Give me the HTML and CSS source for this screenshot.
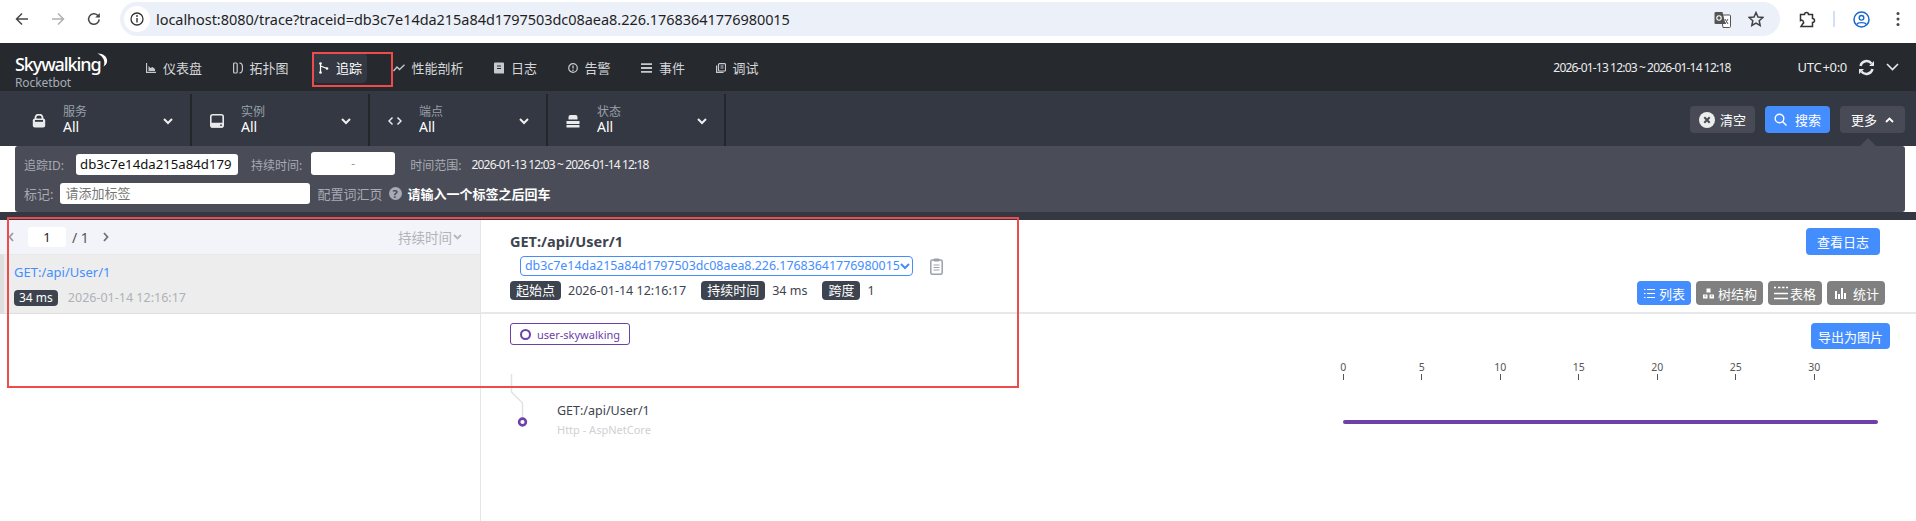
FILE: index.html
```html
<!DOCTYPE html>
<html lang="zh-CN">
<head>
<meta charset="utf-8">
<title>SkyWalking Trace</title>
<link rel="stylesheet" href="styles.css">
</head>
<body>
<header class="chrome">
  <svg class="c-btn c-back" viewBox="0 0 14 14"><path d="M13 7H2M7 1.5 1.5 7 7 12.5" fill="none" stroke="#474747" stroke-width="1.5"/></svg>
  <svg class="c-btn c-fwd" viewBox="0 0 14 14"><path d="M1 7h11M7 1.5 12.5 7 7 12.5" fill="none" stroke="#b0b0b0" stroke-width="1.5"/></svg>
  <svg class="c-btn c-reload" viewBox="0 0 14 14"><path d="M12.2 7.4A5.3 5.3 0 1 1 10.6 3.2L12.4 5" fill="none" stroke="#474747" stroke-width="1.5"/><path d="M12.8 1v4.6H8.2z" fill="#474747"/></svg>
  <div class="omnibox">
    <span class="info-chip"><svg viewBox="0 0 14 14" width="14" height="14"><circle cx="7" cy="7" r="6" fill="none" stroke="#333" stroke-width="1.3"/><path d="M7 6v4.4" stroke="#333" stroke-width="1.4"/><circle cx="7" cy="4" r=".9" fill="#333"/></svg></span>
    <span class="url">localhost:8080/trace?traceid=db3c7e14da215a84d1797503dc08aea8.226.17683641776980015</span>
    <svg class="o-translate" viewBox="0 0 17 17" width="17" height="17"><path d="M7 4h8.500a1 1 0 0 1 1 1v10.500a1 1 0 0 1-1 1H9z" fill="#fff" stroke="#555"/><path d="M1.500 1h7l3 12h-10a1 1 0 0 1-1-1V2a1 1 0 0 1 1-1z" fill="#555"/><circle cx="5" cy="7" r="2.200" fill="none" stroke="#fff" stroke-width="1.100"/><path d="M11 8l3 5M14 8l-3 5" stroke="#555"/></svg>
    <svg class="o-star" viewBox="0 0 16 16" width="16" height="16"><path d="M8 1.500l2 4.500 4.800.5-3.600 3.200 1 4.800L8 12.100 3.800 14.500l1-4.800L1.200 6.500 6 6z" fill="none" stroke="#444" stroke-width="1.500"/></svg>
  </div>
  <svg class="c-ext" viewBox="0 0 17 17" width="17" height="17"><path d="M1.500 3.500h4a2 2 0 0 1 4 0h4v4a2 2 0 0 1 0 4v4h-11.500l1.500-2.500a2 2 0 0 0-2-3.500z" fill="none" stroke="#333" stroke-width="1.500"/></svg>
  <span class="c-sep"></span>
  <svg class="c-profile" viewBox="0 0 17 17" width="17" height="17"><circle cx="8.500" cy="8.500" r="7.500" fill="none" stroke="#1a66d2" stroke-width="1.500"/><circle cx="8.500" cy="6.800" r="2.300" fill="none" stroke="#1a66d2" stroke-width="1.400"/><path d="M3.800 13.500c1-2.500 8.400-2.500 9.400 0" fill="none" stroke="#1a66d2" stroke-width="1.400"/></svg>
  <svg class="c-dots" viewBox="0 0 4 16" width="4" height="16"><circle cx="2" cy="2.500" r="1.500" fill="#474747"/><circle cx="2" cy="8" r="1.500" fill="#474747"/><circle cx="2" cy="13.500" r="1.500" fill="#474747"/></svg>
</header>

<nav class="nav">
  <div class="logo">
    <div class="logo-main"><span>Sky</span><span class="logo-w">walking</span><svg class="logo-moon" viewBox="0 0 14 14" width="15" height="14"><path d="M3 .6C8 .2 13 3.500 12.600 8.500 12.400 10.800 11 12.500 9 13.500 10.500 10.500 10 6.500 7.800 4.200 6.500 2.800 5 1.800 3 .6z" fill="#fff"/></svg></div>
    <div class="logo-sub">Rocketbot</div>
  </div>
  <div class="nav-items">
    <a class="nav-item"><svg viewBox="0 0 10 10" width="10" height="10"><path d="M.5 0v9.500H10" fill="none" stroke="#c6c9cd" stroke-width="1.300"/><path d="M2.500 8V3l2 2 2-1 2.500 2v2z" fill="#c6c9cd"/></svg>仪表盘</a>
    <a class="nav-item"><svg viewBox="0 0 10 12" width="10" height="12"><rect x=".6" y="1" width="3.600" height="10" rx="1" fill="none" stroke="#c6c9cd" stroke-width="1.200"/><path d="M6.500 1.200h.5c1.500 0 2.500 1.500 2.500 4.800s-1 4.800-2.500 4.800h-.5" fill="none" stroke="#c6c9cd" stroke-width="1.200"/></svg>拓扑图</a>
    <a class="nav-item active"><svg viewBox="0 0 10 12" width="10" height="12"><path d="M1.500 1v10M1.500 4l6.500 2.500" stroke="#fff" stroke-width="1.200"/><circle cx="1.500" cy="1.500" r="1.300" fill="#fff"/><circle cx="1.500" cy="10.500" r="1.300" fill="#fff"/><circle cx="8" cy="6.500" r="1.300" fill="#fff"/></svg>追踪</a>
    <a class="nav-item"><svg viewBox="0 0 12 8" width="12" height="8"><path d="M.5 7 4 3l2.500 2.500L11.500.8" fill="none" stroke="#c6c9cd" stroke-width="1.300"/></svg>性能剖析</a>
    <a class="nav-item"><svg viewBox="0 0 10 12" width="10" height="12"><path d="M1 .5h8a1 1 0 0 1 1 1v10H1a1 1 0 0 1-1-1v-9a1 1 0 0 1 1-1z" fill="#c6c9cd"/><path d="M3 4h4M3 6.500h4" stroke="#26292e" stroke-width="1.200"/></svg>日志</a>
    <a class="nav-item"><svg viewBox="0 0 10 10" width="10" height="10"><circle cx="5" cy="5" r="4.300" fill="none" stroke="#c6c9cd" stroke-width="1.200"/><path d="M5 2.500v3" stroke="#c6c9cd" stroke-width="1.300"/><circle cx="5" cy="7.300" r=".8" fill="#c6c9cd"/></svg>告警</a>
    <a class="nav-item"><svg viewBox="0 0 11 10" width="11" height="10"><path d="M0 1.200h11M0 5h11M0 8.800h11" stroke="#c6c9cd" stroke-width="1.800"/></svg>事件</a>
    <a class="nav-item"><svg viewBox="0 0 10 10" width="10" height="10"><rect x="2.500" y=".6" width="7" height="7.400" rx="1" fill="none" stroke="#c6c9cd" stroke-width="1.200"/><path d="M.6 2.500v6.900h7M4.500 3h3M4.500 5h3" fill="none" stroke="#c6c9cd" stroke-width="1.200"/></svg>调试</a>
  </div>
  <div class="nav-date">2026-01-13 12:03 ~ 2026-01-14 12:18</div>
  <div class="nav-utc">UTC +0:0</div>
  <svg class="nav-refresh" viewBox="0 0 17 17" width="17" height="17"><path d="M2.500 7A6.200 6.200 0 0 1 13.500 4.500M14.500 10A6.200 6.200 0 0 1 3.500 12.500" fill="none" stroke="#e8e9ea" stroke-width="2.400"/><path d="M16 2v5h-5zM1 15v-5h5z" fill="#e8e9ea"/></svg>
  <svg class="nav-chev" viewBox="0 0 13 8" width="13" height="8"><path d="M1 1l5.500 5.500L12 1" fill="none" stroke="#e8e9ea" stroke-width="1.600"/></svg>
</nav>

<section class="filters">
  <div class="filter">
    <svg class="f-icon" viewBox="0 0 14 14" width="14" height="14"><path d="M3.500 5V3.500a3.500 3 0 0 1 7 0V5" fill="none" stroke="#e9eaec" stroke-width="1.800"/><rect x=".8" y="4.500" width="12.400" height="9" rx="2" fill="#e9eaec"/><rect x="3" y="6" width="8" height="1.800" fill="#333842"/></svg>
    <div class="f-text"><span class="f-label">服务</span><span class="f-val">All</span></div>
    <svg class="f-chev" viewBox="0 0 10 7" width="10" height="7"><path d="M1 1l4 4 4-4" fill="none" stroke="#eee" stroke-width="2"/></svg>
  </div>
  <div class="filter">
    <svg class="f-icon" viewBox="0 0 14 14" width="14" height="14"><rect x=".8" y=".8" width="12.400" height="12" rx="2" fill="none" stroke="#e9eaec" stroke-width="1.600"/><rect x=".5" y="8.800" width="13" height="5" rx="1.500" fill="#e9eaec"/><circle cx="11" cy="11.200" r=".9" fill="#333842"/></svg>
    <div class="f-text"><span class="f-label">实例</span><span class="f-val">All</span></div>
    <svg class="f-chev" viewBox="0 0 10 7" width="10" height="7"><path d="M1 1l4 4 4-4" fill="none" stroke="#eee" stroke-width="2"/></svg>
  </div>
  <div class="filter">
    <svg class="f-icon" viewBox="0 0 14 14" width="14" height="14"><path d="M4.500 3.500 1 7l3.500 3.500M9.500 3.500 13 7l-3.500 3.500" fill="none" stroke="#e9eaec" stroke-width="1.500"/></svg>
    <div class="f-text"><span class="f-label">端点</span><span class="f-val">All</span></div>
    <svg class="f-chev" viewBox="0 0 10 7" width="10" height="7"><path d="M1 1l4 4 4-4" fill="none" stroke="#eee" stroke-width="2"/></svg>
  </div>
  <div class="filter">
    <svg class="f-icon" viewBox="0 0 14 14" width="14" height="14"><path d="M2.500 5.500V3a2 2 0 0 1 2-2h5a2 2 0 0 1 2 2v2.500zM.5 7h13v3H.5zM.5 11h13v2.500H.5z" fill="#e9eaec"/></svg>
    <div class="f-text"><span class="f-label">状态</span><span class="f-val">All</span></div>
    <svg class="f-chev" viewBox="0 0 10 7" width="10" height="7"><path d="M1 1l4 4 4-4" fill="none" stroke="#eee" stroke-width="2"/></svg>
  </div>
  <div class="f-actions">
    <button class="btn btn-dark"><svg viewBox="0 0 16 16" width="16" height="16"><circle cx="8" cy="8" r="8" fill="#eceded"/><path d="M5.300 5.300l5.400 5.400M10.700 5.300l-5.400 5.400" stroke="#484b55" stroke-width="2"/></svg>清空</button>
    <button class="btn btn-blue"><svg viewBox="0 0 13 13" width="13" height="13"><circle cx="5.500" cy="5.500" r="4.300" fill="none" stroke="#fff" stroke-width="1.400"/><path d="M8.500 8.500l4 4" stroke="#fff" stroke-width="1.400"/></svg>搜索</button>
    <button class="btn btn-dark btn-more">更多<svg viewBox="0 0 9 6" width="9" height="6"><path d="M1 5l3.500-3.500L8 5" fill="none" stroke="#fff" stroke-width="1.800"/></svg></button>
  </div>
</section>

<section class="panel">
  <span class="panel-arrow"></span>
  <div class="p-row p-row1">
    <label class="p-label">追踪ID:</label>
    <div class="p-input p-id">db3c7e14da215a84d179</div>
    <label class="p-label p-dur">持续时间:</label>
    <div class="p-input p-range">-</div>
    <label class="p-label p-time">时间范围:</label>
    <span class="p-value">2026-01-13 12:03 ~ 2026-01-14 12:18</span>
  </div>
  <div class="p-row p-row2">
    <label class="p-label">标记:</label>
    <div class="p-input p-tag">请添加标签</div>
    <span class="p-label p-vocab">配置词汇页</span>
    <span class="p-help">?</span>
    <strong class="p-hint">请输入一个标签之后回车</strong>
  </div>
</section>
<div class="strip"></div>

<main class="main">
  <aside class="left">
    <div class="pager">
      <svg class="pg-arrow" viewBox="0 0 6 10" width="6" height="10"><path d="M5 1 1.500 5 5 9" fill="none" stroke="#9a9ca3" stroke-width="1.800"/></svg>
      <div class="pg-input">1</div>
      <span class="pg-total">/ 1</span>
      <svg class="pg-arrow pg-next" viewBox="0 0 6 10" width="6" height="10"><path d="M1 1l3.500 4L1 9" fill="none" stroke="#6f7278" stroke-width="1.800"/></svg>
      <span class="pg-sort">持续时间</span>
      <svg class="pg-chev" viewBox="0 0 9 6" width="9" height="6"><path d="M1 1l3.500 3.500L8 1" fill="none" stroke="#b4b6bb" stroke-width="1.800"/></svg>
    </div>
    <div class="trace-item">
      <div class="ti-title">GET:/api/User/1</div>
      <div class="ti-meta"><span class="pill">34 ms</span><span class="ti-date">2026-01-14 12:16:17</span></div>
    </div>
  </aside>
  <div class="right">
    <div class="head">
      <div class="head-top">
        <h1 class="title">GET:/api/User/1</h1>
        <button class="btn-blue btn-log">查看日志</button>
      </div>
      <div class="sel-row">
        <div class="sel">db3c7e14da215a84d1797503dc08aea8.226.17683641776980015<svg viewBox="0 0 10 7" width="10" height="7"><path d="M1 1l4 4 4-4" fill="none" stroke="#448dfe" stroke-width="2"/></svg></div>
        <svg class="clip" viewBox="0 0 13 17" width="13" height="17"><rect x=".8" y="2" width="11.400" height="14.200" rx="1.500" fill="none" stroke="#9aa0aa" stroke-width="1.500"/><rect x="3.500" y=".5" width="6" height="3" rx="1" fill="#9aa0aa"/><path d="M3.500 7h6M3.500 9.500h6M3.500 12h6" stroke="#9aa0aa"/></svg>
      </div>
      <div class="meta-row">
        <span class="pill pill-lg">起始点</span><span class="meta-val m-start">2026-01-14 12:16:17</span>
        <span class="pill pill-lg">持续时间</span><span class="meta-val m-dur">34 ms</span>
        <span class="pill pill-lg">跨度</span><span class="meta-val">1</span>
        <div class="views">
          <button class="view v-on"><svg viewBox="0 0 11 11" width="11" height="11"><path d="M3 1.500h8M3 5.500h8M3 9.500h8M0 1.500h1.500M0 5.500h1.500M0 9.500h1.500" stroke="#fff" stroke-width="1.200"/></svg>列表</button>
          <button class="view"><svg viewBox="0 0 11 11" width="11" height="11"><path d="M3.500.5h4v4h-4zM0 6.500h4.500v4H0zM6.500 6.500H11v4H6.500z" fill="#fff"/><path d="M1.500 8h1.500M8 8h1.500" stroke="#808080"/></svg>树结构</button>
          <button class="view v-tight"><svg viewBox="0 0 14 14" width="14" height="14"><path d="M0 1.500h2M4 1.500h2.500M8 1.500h2.500M12 1.500h2M0 7.500h14M0 12.500h14" stroke="#fff" stroke-width="1.500"/></svg>表格</button>
          <button class="view v-wide"><svg viewBox="0 0 11 11" width="11" height="11"><path d="M0 3h2v8H0zM3 6h2v5H3zM6 0h2v11H6zM9 5h2v6H9z" fill="#fff"/></svg>统计</button>
        </div>
      </div>
    </div>
    <div class="legend-row">
      <div class="legend"><span class="legend-dot"></span>user-skywalking</div>
      <button class="btn-blue btn-export">导出为图片</button>
    </div>
    <div class="timeline">
      <svg class="tree" viewBox="0 0 20 56" width="20" height="56"><path d="M1.500 0v18l11 11v16" fill="none" stroke="#e2e2e2" stroke-width="1.500"/><circle cx="12.500" cy="48" r="3.400" fill="#fff" stroke="#6e40aa" stroke-width="2.600"/></svg>
      <div class="span-text">
        <div class="span-name">GET:/api/User/1</div>
        <div class="span-kind">Http - AspNetCore</div>
      </div>
      <div class="chart">
        <div class="ruler">
          <div class="tick">0</div><div class="tick">5</div><div class="tick">10</div><div class="tick">15</div><div class="tick">20</div><div class="tick">25</div><div class="tick">30</div>
        </div>
        <div class="bar"></div>
      </div>
    </div>
  </div>
</main>

<div class="mark mark-nav"></div>
<div class="mark mark-main"></div>
</body>
</html>
```
FILE: styles.css
```css
* { box-sizing: border-box; }
html, body { margin: 0; padding: 0; }
body {
  width: 1916px;
  height: 521px;
  overflow: hidden;
  position: relative;
  background: #fff;
  color: #3d444f;
  font-family: "Noto Sans", "Noto Sans CJK SC", sans-serif;
  font-size: 12px;
}
button { font-family: inherit; border: 0; cursor: pointer; padding: 0; }
svg { flex: none; display: block; }

/* browser chrome */
.chrome { height: 43px; display: flex; align-items: flex-start; background: #fff; }
.c-btn { width: 14px; height: 14px; margin-top: 12px; }
.c-back { margin-left: 15px; }
.c-fwd { margin-left: 22px; }
.c-reload { margin-left: 22px; }
.omnibox {
  width: 1660px; height: 34px; margin: 2px 0 0 19px; border-radius: 17px;
  background: #ebf0f9; display: flex; align-items: center; padding-left: 4px;
}
.info-chip { width: 26px; height: 26px; border-radius: 50%; background: #fff; display: flex; align-items: center; justify-content: center; flex: none; }
.url { margin-left: 6px; font-size: 14.5px; color: #1f1f1f; white-space: nowrap; letter-spacing: -.05px; }
.o-translate { margin-left: auto; }
.o-star { margin: 0 16px 0 17px; }
.c-ext { margin: 11px 0 0 19px; }
.c-sep { width: 2px; height: 16px; margin: 11px 0 0 17px; background: #d3e0f5; }
.c-profile { margin: 11px 0 0 18px; }
.c-dots { margin: 11px 0 0 26px; }

/* top nav */
.nav { height: 48px; background: #26292e; display: flex; align-items: center; color: #d4d6d9; position: relative; }
.logo { width: 140px; padding-left: 15px; color: #fff; align-self: flex-start; padding-top: 9px; }
.logo-main { display: flex; align-items: flex-start; font-size: 18px; line-height: 24px; font-weight: 500; letter-spacing: -1.1px; height: 24px; }
.logo-w { margin-left: 0; }
.logo-moon { margin: 1px 0 0 -7px; }
.logo-sub { font-size: 12px; line-height: 14px; color: #a5adb8; margin-top: 0; letter-spacing: -.1px; }
.nav-items { display: flex; gap: 19.5px; height: 31px; align-self: flex-start; margin-top: 9px; }
.nav-item { height: 31px; padding: 0 5px 0 6px; display: flex; align-items: center; gap: 7px; font-size: 13px; border-radius: 5px; white-space: nowrap; }
.nav-item.active { background: #333842; color: #fff; }
.nav-date { margin-left: auto; font-size: 12px; letter-spacing: -.8px; word-spacing: -.2px; color: #eceded; white-space: nowrap; }
.nav-utc { margin-left: 67px; font-size: 13px; color: #eceded; white-space: nowrap; letter-spacing: -.3px; word-spacing: -2px; }
.nav-refresh { margin-left: 11px; }
.nav-chev { margin: 0 17px 0 11px; }

/* filter bar */
.filters { height: 55px; background: #333842; display: flex; padding-left: 14px; padding-right: 11px; padding-top: 3px; }
.filter { width: 178px; height: 52px; border-right: 2px solid #23262b; display: flex; align-items: center; padding-left: 18px; color: #fff; }
.f-icon { margin-top: 1px; }
.f-text { display: flex; flex-direction: column; margin-left: 17px; margin-top: -2px; }
.f-label { font-size: 12px; color: #99a0aa; line-height: 15px; }
.f-val { font-size: 14px; color: #fff; line-height: 16px; }
.f-chev { margin-left: auto; margin-right: 17px; margin-top: 2px; }
.f-actions { margin-left: auto; display: flex; gap: 10px; padding-top: 12px; }
.btn { height: 27px; width: 65px; border-radius: 4px; color: #fff; font-size: 13px; display: flex; align-items: center; justify-content: center; gap: 5px; }
.btn-dark { background: #484b55; }
.btn-blue { background: #448dfe; color: #fff; }
.btn-blue svg { margin-right: 3px; }
.btn-more { gap: 8px; }

/* expanded panel */
.panel { height: 66px; margin: 0 11px 0 15px; background: #4a4c57; border-radius: 3px; position: relative; font-size: 13px; color: #a6abb4; padding: 8px 0 0 9px; }
.panel-arrow { position: absolute; left: 1845px; top: -8px; border: 8px solid transparent; border-top: 0; border-bottom-color: #4a4c57; }
.p-row { display: flex; align-items: center; white-space: nowrap; height: 21px; }
.p-row2 { margin-top: 8px; }
.p-label { color: #a6abb4; font-size: 13px; }
.p-row1 .p-label { font-size: 12px; }
.p-input { background: #fff; border-radius: 3px; flex: none; }
.p-id { width: 162px; height: 21px; margin-left: 12px; font-size: 13.2px; color: #111; line-height: 21px; padding-left: 4px; }
.p-row1 .p-dur { margin-left: 13px; }
.p-range { width: 84px; height: 23px; margin: -2px 0 0 9px; text-align: center; color: #999; line-height: 23px; font-size: 12px; }
.p-row1 .p-time { margin-left: 15px; }
.p-value { font-size: 12px; margin-left: 10px; letter-spacing: -.8px; word-spacing: -.2px; color: #f0f0f2; }
.p-tag { width: 250px; height: 21px; margin-left: 7px; color: #777; font-size: 13px; line-height: 21px; padding-left: 5px; }
.p-vocab { margin-left: 7px; }
.p-help { width: 13px; height: 13px; border-radius: 50%; background: #a6abb4; color: #4a4c57; font-size: 11px; font-weight: 700; line-height: 13px; text-align: center; margin-left: 6px; }
.p-hint { color: #fff; font-weight: 700; font-size: 13px; margin-left: 6px; }
.strip { height: 8px; background: #333842; }

/* main */
.main { display: flex; height: 301px; }
.left { width: 481px; border-right: 1px solid #e6e6e6; flex: none; }
.pager { height: 34px; background: #f3f4f9; display: flex; align-items: center; padding-left: 8px; color: #555; }
.pg-input { width: 38px; height: 20px; margin-left: 14px; background: #fff; border-radius: 3px; text-align: center; font-size: 13px; line-height: 20px; color: #222; }
.pg-total { margin-left: 6px; font-size: 14px; color: #555; }
.pg-next { margin-left: 14px; }
.pg-sort { margin-left: auto; color: #b0b3b8; font-size: 13.5px; }
.pg-chev { margin: 0 18px 0 1px; }
.trace-item { height: 60px; background: #ededed; border-left: 4px solid #dedede; border-bottom: 1px solid #dfdfdf; border-top: 1px solid #e8e8e8; padding: 7px 0 0 10px; }
.ti-title { color: #448dfe; font-size: 13px; line-height: 20px; }
.ti-meta { display: flex; align-items: center; margin-top: 7px; }
.pill { background: #3d444f; color: #fff; border-radius: 4px; font-size: 12px; height: 16px; line-height: 16px; padding: 0 5px; white-space: nowrap; }
.ti-date { color: #aeb2b8; font-size: 12.5px; margin-left: 10px; }

.right { flex: 1; min-width: 0; }
.head { height: 94px; border-bottom: 2px solid #e8e8e8; padding: 8px 0 0 29px; }
.head-top { height: 28px; display: flex; align-items: flex-start; }
.title { margin: 3px 0 0; font-size: 14.5px; line-height: 20px; font-weight: 700; color: #3d444f; }
.btn-log { margin-left: auto; margin-right: 36px; width: 74px; height: 27px; border-radius: 4px; font-size: 13px; }
.sel-row { display: flex; align-items: center; height: 20px; margin-left: 10px; }
.sel { width: 393px; height: 20px; border: 1px solid #448dfe; border-radius: 4px; color: #448dfe; font-size: 12.4px; line-height: 18px; padding-left: 4px; white-space: nowrap; display: flex; align-items: center; justify-content: space-between; padding-right: 2px; }
.clip { margin-left: 17px; }
.meta-row { display: flex; align-items: flex-start; margin-top: 5px; height: 24px; }
.pill-lg { height: 19px; line-height: 19px; font-size: 13px; padding: 0 6px; }
.meta-val { font-size: 12.5px; line-height: 19px; margin-left: 7px; color: #3d444f; white-space: nowrap; }
.m-start { margin-right: 15px; }
.m-dur { margin-right: 15px; }
.views { margin-left: auto; margin-right: 31px; display: flex; gap: 5px; }
.view { height: 24px; padding: 0 6px 0 7px; background: #808080; color: #fff; font-size: 13px; border-radius: 4px; display: flex; align-items: center; gap: 4px; white-space: nowrap; }
.v-tight { gap: 2px; padding: 0 6px; }
.v-wide { gap: 7px; padding: 0 6px 0 8px; }
.v-on { background: #448dfe; }

.legend-row { display: flex; align-items: flex-start; padding: 9px 26px 0 29px; height: 45px; }
.legend { height: 22px; width: 120px; border: 1px solid #6e40aa; border-radius: 3px; color: #6e40aa; font-size: 11px; display: flex; align-items: center; padding-left: 9px; gap: 6px; }
.legend-dot { width: 11px; height: 11px; border: 2px solid #6e40aa; border-radius: 50%; }
.btn-export { margin-left: auto; width: 79px; height: 26px; border-radius: 4px; font-size: 13px; }

.timeline { display: flex; padding-left: 29px; position: relative; height: 100px; }
.tree { margin-top: 15px; }
.span-text { margin: 44px 0 0 27px; }
.span-name { font-size: 12.5px; line-height: 16px; color: #3d444f; }
.span-kind { font-size: 11px; line-height: 16px; color: #cfd0d2; margin-top: 3px; }
.chart { margin-left: auto; margin-right: 38px; width: 535px; }
.ruler { display: flex; margin: 0 0 0 -39px; height: 22px; padding-top: 2px; }
.tick { width: 78.500px; text-align: center; font-size: 10.500px; line-height: 12px; color: #555; position: relative; }
.tick::after { content: ""; display: block; width: 1px; height: 6px; background: #555; margin: 1px auto 0; }
.bar { height: 4px; margin-top: 39px; background: #6e40aa; border-radius: 2px; }

/* annotations drawn over the screenshot */
.mark { position: absolute; border: 2px solid #f04b4b; pointer-events: none; }
.mark-nav { left: 312px; top: 52px; width: 81px; height: 35px; }
.mark-main { left: 7px; top: 217px; width: 1012px; height: 171px; }
```
